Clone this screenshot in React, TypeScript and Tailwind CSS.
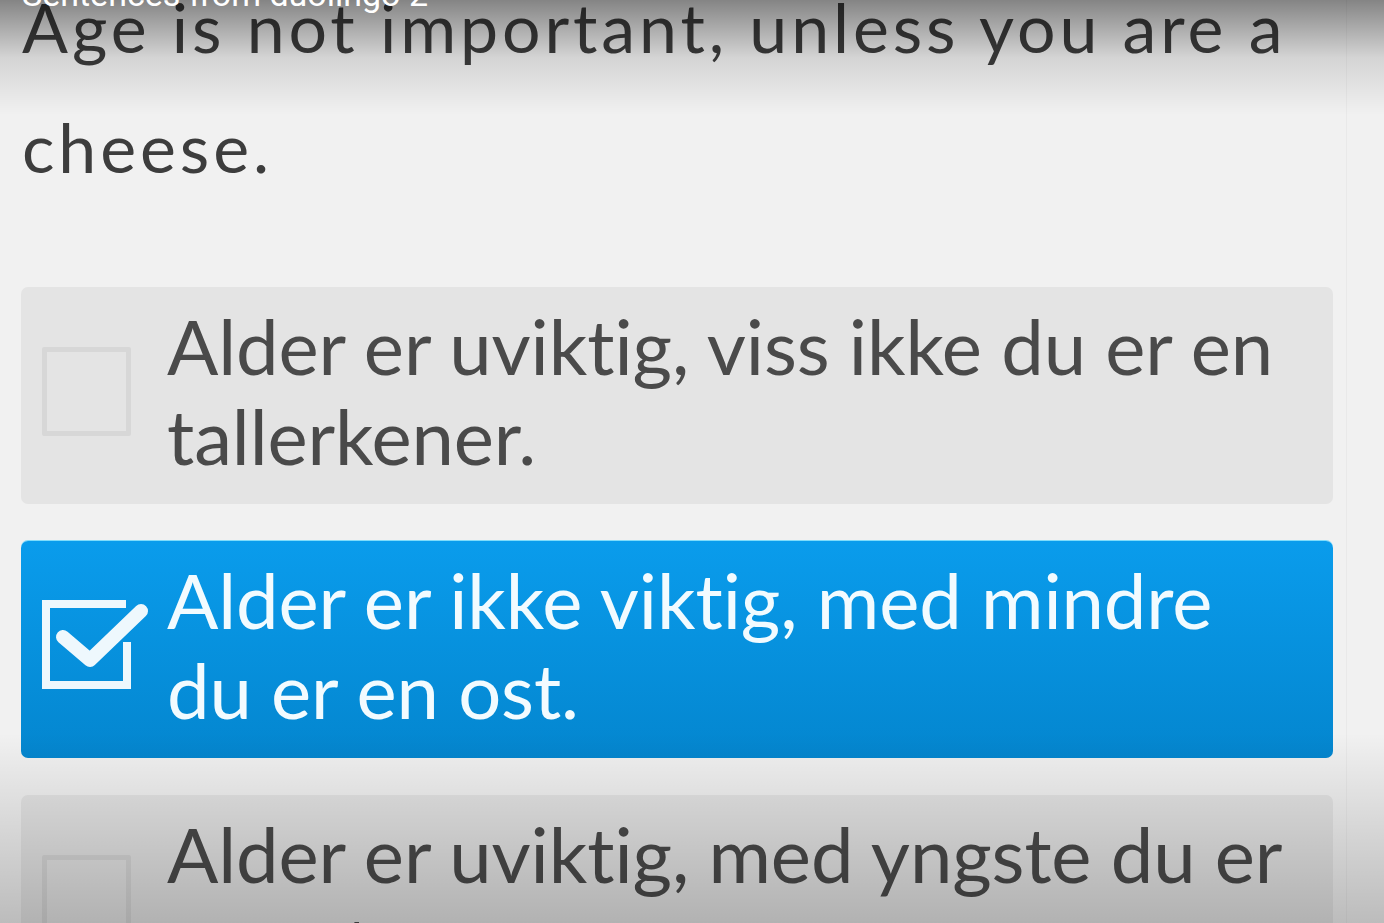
import React from "react";

const font = { fontFamily: "Lato, 'Open Sans', sans-serif" };

function EmptyBox() {
  return (
    <div className="w-[89px] h-[89px] shrink-0 border-[5px] border-[#d7d7d7] rounded-[2px]" />
  );
}

function CheckedBox() {
  return (
    <svg width="89" height="89" viewBox="0 0 89 89" className="shrink-0 overflow-visible">
      <path d="M84 4 H4 V85 H85 V42" fill="none" stroke="#eef8fd" strokeWidth="8" strokeLinejoin="miter" />
      <path d="M21 37 L48 60 L99 11" fill="none" stroke="#eef8fd" strokeWidth="14" strokeLinecap="round" strokeLinejoin="round" />
    </svg>
  );
}

function Option({ text, checked }: { text: string; checked?: boolean }) {
  return (
    <div
      className={
        "flex items-center rounded-[7px] pl-[21px] pr-[30px] pt-[14px] pb-[23px] " +
        (checked
          ? "bg-gradient-to-b from-[#0a9cec] to-[#0486cf] text-[#f2fbff] shadow-[0_-1px_0_0_#7fdcfb]"
          : "bg-[#e4e4e4] text-[#4a4a4a]")
      }
    >
      <div className="w-[110px] shrink-0 flex items-center">
        {checked ? <div className="-mt-[1px]"><CheckedBox /></div> : <EmptyBox />}
      </div>
      <div
        className="ml-[15px] text-[76px] leading-[90px] font-normal tracking-[-0.1px] [font-variant-ligatures:none]"
        style={font}
      >
        {text}
      </div>
    </div>
  );
}

export default function App() {
  return (
    <div className="relative w-[1384px] h-[923px] overflow-hidden bg-[#f1f1f1]">
      <div className="pl-[22px] pr-[20px] w-[1364px]">
        <div
          className="-mt-[33px] text-[68px] leading-[120px] text-[#3d3d3d] font-normal tracking-[3.9px] [font-variant-ligatures:none]"
          style={font}
        >
          Age is not important, unless you are a cheese.
        </div>
      </div>
      <div className="mt-[80px] pl-[21px] w-[1333px] flex flex-col gap-[37px]">
        <Option text="Alder er uviktig, viss ikke du er en tallerkener." />
        <Option text="Alder er ikke viktig, med mindre du er en ost." checked />
        <Option text="Alder er uviktig, med yngste du er en ost." />
      </div>

      {/* video vignette overlays */}
      <div className="absolute left-0 top-0 w-full h-[115px] bg-gradient-to-b from-[rgba(0,0,0,0.45)] via-[rgba(0,0,0,0.12)] to-transparent pointer-events-none" />
      <div className="absolute left-0 bottom-0 w-full h-[190px] bg-gradient-to-b from-transparent to-[rgba(0,0,0,0.22)] pointer-events-none" />
      <div className="absolute left-[1346px] top-0 w-[1px] h-full bg-[rgba(0,0,0,0.03)]" />

      <div
        className="absolute left-[22px] -top-[23px] text-[34px] leading-[34px] text-white whitespace-nowrap"
        style={{ fontFamily: "Roboto, 'Liberation Sans', sans-serif" }}
      >
        Sentences from duolingo 2
      </div>
    </div>
  );
}
